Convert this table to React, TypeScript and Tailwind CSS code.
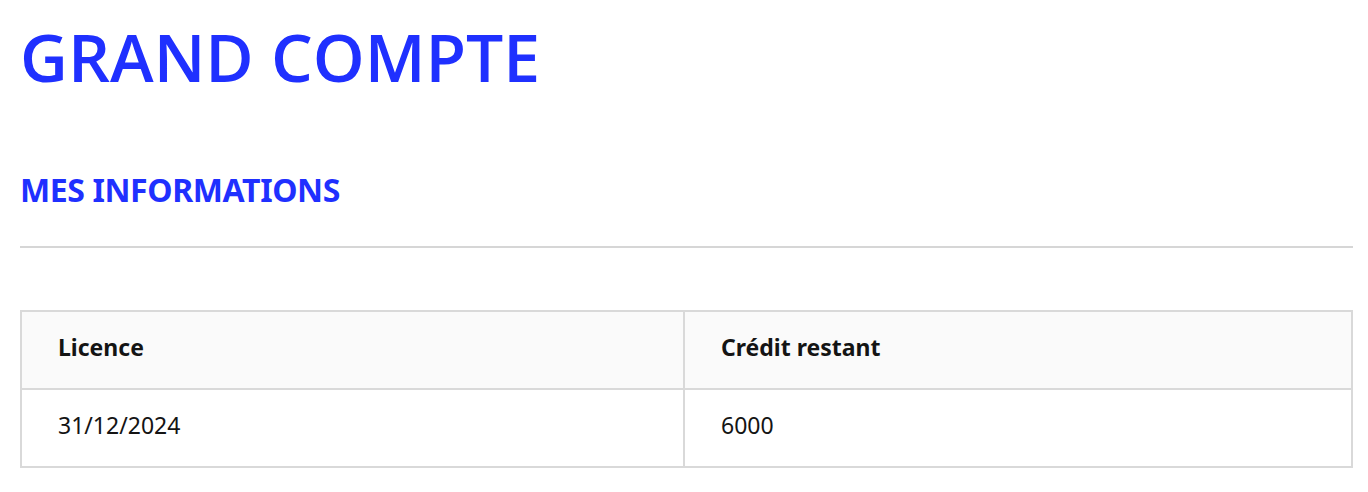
export default function App() {
  return (
    <div className="min-h-screen bg-white pl-[20px] pr-[15px]">
      <h1 className="pt-[20px] text-[66px] leading-[72px] font-semibold text-[#1f30ff]" style={{ fontFamily: '"Open Sans", sans-serif' }}>
        GRAND COMPTE
      </h1>
      <h2 className="mt-[78px] text-[32px] leading-[40px] font-bold text-[#1f30ff] tracking-[-0.4px]" style={{ fontFamily: '"Noto Sans", sans-serif' }}>
        MES INFORMATIONS
      </h2>
      <hr className="mt-[36px] border-0 h-[2px] bg-[#d6d6d6]" />
      <table className="mt-[62px] w-full border-collapse border-2 border-[#d9d9d9] text-[23px] text-[#141414]" style={{ fontFamily: '"Noto Sans", sans-serif' }}>
        <thead>
          <tr className="bg-[#fafafa] h-[78px]">
            <th className="w-[663px] border-2 border-[#d9d9d9] px-[36px] pb-[6px] text-left font-bold">Licence</th>
            <th className="border-2 border-[#d9d9d9] px-[36px] pb-[6px] text-left font-bold">Crédit restant</th>
          </tr>
        </thead>
        <tbody>
          <tr className="h-[78px]">
            <td className="border-2 border-[#d9d9d9] px-[36px] pb-[6px]">31/12/2024</td>
            <td className="border-2 border-[#d9d9d9] px-[36px] pb-[6px]">6000</td>
          </tr>
        </tbody>
      </table>
    </div>
  );
}
